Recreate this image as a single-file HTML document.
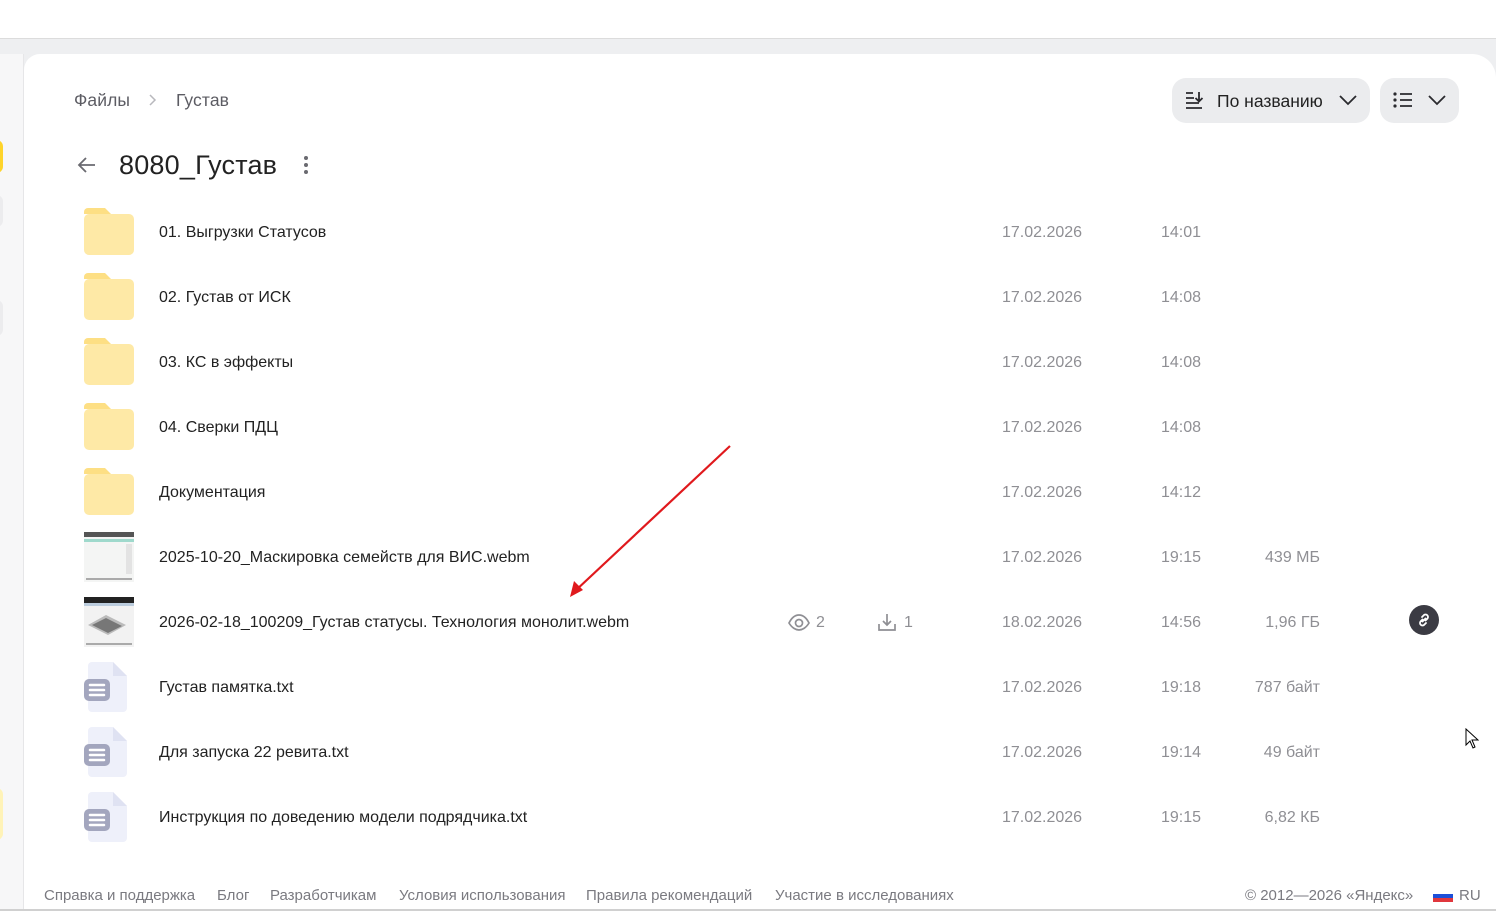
<!DOCTYPE html>
<html><head><meta charset="utf-8"><style>
*{margin:0;padding:0;box-sizing:border-box}
body{width:1496px;height:911px;overflow:hidden;background:#fff;font-family:"Liberation Sans","Noto Sans CJK SC",sans-serif;position:relative;color:#1f1f1f}
.a{position:absolute}
.row{position:absolute;left:0;width:1496px;height:65px}
.name{position:absolute;left:159px;font-size:16px;color:#222;top:50%;transform:translateY(-44%);white-space:nowrap}
.g{position:absolute;font-size:16px;color:#8f8f94;top:50%;transform:translateY(-44%);white-space:nowrap}
.ic{position:absolute;left:84px;top:50%;transform:translateY(-50%)}
.foot{position:absolute;top:887px;font-size:15px;color:#7a7a80;white-space:nowrap}
</style></head><body>
<div class="a" style="left:0;top:38px;width:1496px;height:1px;background:#dcdcdc"></div>
<div class="a" style="left:0;top:39px;width:1496px;height:872px;background:#eeeff1"></div>
<div class="a" style="left:0;top:54px;width:23px;height:857px;background:#f7f7f8"></div>
<div class="a" style="left:-10px;top:140px;width:13px;height:33px;background:#fed42b;border-radius:8px"></div>
<div class="a" style="left:-10px;top:195px;width:13px;height:32px;background:#ececee;border-radius:8px"></div>
<div class="a" style="left:-10px;top:300px;width:13px;height:36px;background:#ececee;border-radius:8px"></div>
<div class="a" style="left:-10px;top:788px;width:13px;height:52px;background:#fff3b8;border-radius:8px"></div>
<div class="a" style="left:23px;top:54px;width:1px;height:857px;background:#e6e6e8"></div>
<div class="a" style="left:24px;top:54px;width:1472px;height:855px;background:#fff;border-radius:16px 24px 0 0"></div>
<div class="a" style="left:0;top:909px;width:1496px;height:2px;background:#d0d0d0"></div>

<div class="a" style="left:74px;top:90px;font-size:17.5px;color:#5c5c63;letter-spacing:0.1px">Файлы</div>
<svg class="a" style="left:148px;top:93px" width="10" height="14"><path d="M2 2l5 5-5 5" fill="none" stroke="#b8b8bd" stroke-width="1.5"/></svg>
<div class="a" style="left:176px;top:90px;font-size:17.5px;color:#5c5c63;letter-spacing:0.1px">Густав</div>

<svg class="a" style="left:77px;top:156px" width="20" height="18"><path d="M18 9H3M9 2L2 9l7 7" fill="none" stroke="#6a6a70" stroke-width="1.8"/></svg>
<div class="a" style="left:119px;top:150px;font-size:27px;color:#222;letter-spacing:0.2px">8080_Густав</div>
<svg class="a" style="left:302px;top:155px" width="8" height="22"><circle cx="4" cy="3" r="2" fill="#6a6a70"/><circle cx="4" cy="10" r="2" fill="#6a6a70"/><circle cx="4" cy="17" r="2" fill="#6a6a70"/></svg>

<div class="a" style="left:1172px;top:78px;width:198px;height:45px;background:#ebecee;border-radius:14px"></div>
<svg class="a" style="left:1184px;top:90px" width="20" height="20"><path d="M2 3h7M2 8h8M2 13h13M2 18h16" stroke="#2a2a2e" stroke-width="1.8"/><path d="M15 2v9M11.5 8l3.5 3.5 3.5-3.5" fill="none" stroke="#2a2a2e" stroke-width="1.8"/></svg>
<div class="a" style="left:1217px;top:91px;font-size:17.5px;color:#222">По названию</div>
<svg class="a" style="left:1338px;top:94px" width="20" height="12"><path d="M2 2l8 8 8-8" fill="none" stroke="#2a2a2e" stroke-width="1.8"/></svg>
<div class="a" style="left:1380px;top:78px;width:79px;height:45px;background:#ebecee;border-radius:14px"></div>
<svg class="a" style="left:1392px;top:91px" width="22" height="18"><circle cx="3" cy="3" r="1.6" fill="#2a2a2e"/><circle cx="3" cy="9" r="1.6" fill="#2a2a2e"/><circle cx="3" cy="15" r="1.6" fill="#2a2a2e"/><path d="M8 3h12M8 9h12M8 15h12" stroke="#2a2a2e" stroke-width="1.8"/></svg>
<svg class="a" style="left:1427px;top:94px" width="20" height="12"><path d="M2 2l8 8 8-8" fill="none" stroke="#2a2a2e" stroke-width="1.8"/></svg>

<div class="row" style="top:199px"><svg class="ic" width="52" height="48"><path d="M0 4a4 4 0 014-4h17l6 6H0z" fill="#fddf84"/><rect x="0" y="6" width="50" height="41" rx="5" fill="#fee9a6"/></svg><div class="name">01. Выгрузки Статусов</div><div class="g" style="left:1002px">17.02.2026</div><div class="g" style="left:1161px">14:01</div></div>
<div class="row" style="top:264px"><svg class="ic" width="52" height="48"><path d="M0 4a4 4 0 014-4h17l6 6H0z" fill="#fddf84"/><rect x="0" y="6" width="50" height="41" rx="5" fill="#fee9a6"/></svg><div class="name">02. Густав от ИСК</div><div class="g" style="left:1002px">17.02.2026</div><div class="g" style="left:1161px">14:08</div></div>
<div class="row" style="top:329px"><svg class="ic" width="52" height="48"><path d="M0 4a4 4 0 014-4h17l6 6H0z" fill="#fddf84"/><rect x="0" y="6" width="50" height="41" rx="5" fill="#fee9a6"/></svg><div class="name">03. КС в эффекты</div><div class="g" style="left:1002px">17.02.2026</div><div class="g" style="left:1161px">14:08</div></div>
<div class="row" style="top:394px"><svg class="ic" width="52" height="48"><path d="M0 4a4 4 0 014-4h17l6 6H0z" fill="#fddf84"/><rect x="0" y="6" width="50" height="41" rx="5" fill="#fee9a6"/></svg><div class="name">04. Сверки ПДЦ</div><div class="g" style="left:1002px">17.02.2026</div><div class="g" style="left:1161px">14:08</div></div>
<div class="row" style="top:459px"><svg class="ic" width="52" height="48"><path d="M0 4a4 4 0 014-4h17l6 6H0z" fill="#fddf84"/><rect x="0" y="6" width="50" height="41" rx="5" fill="#fee9a6"/></svg><div class="name">Документация</div><div class="g" style="left:1002px">17.02.2026</div><div class="g" style="left:1161px">14:12</div></div>
<div class="row" style="top:524px"><svg class="ic" width="50" height="50"><rect width="50" height="50" fill="#f4f5f4"/><rect width="50" height="5" fill="#555"/><rect x="0" y="7" width="50" height="3" fill="#9fd9cc"/><rect x="2" y="46" width="46" height="2" fill="#aaa"/><rect x="42" y="12" width="6" height="30" fill="#e3e3e3"/></svg><div class="name">2025-10-20_Маскировка семейств для ВИС.webm</div><div class="g" style="left:1002px">17.02.2026</div><div class="g" style="left:1161px">19:15</div><div class="g" style="right:176px">439 МБ</div></div>
<div class="row" style="top:589px"><svg class="ic" width="50" height="50"><rect width="50" height="50" fill="#f2f2f2"/><rect width="50" height="6" fill="#222"/><rect x="0" y="6" width="50" height="3" fill="#bcd"/><path d="M4 28l18-10 20 10-18 10z" fill="#bbb"/><path d="M8 28l14-7 16 8-14 7z" fill="#777"/><rect x="2" y="46" width="46" height="2" fill="#aaa"/></svg><div class="name">2026-02-18_100209_Густав статусы. Технология монолит.webm</div>
<svg class="a" style="left:788px;top:24px" width="22" height="18"><path d="M1 10c3-6 7-8 10-8s7 2 10 8c-3 5-7 7-10 7s-7-2-10-7z" fill="none" stroke="#8f8f94" stroke-width="1.7"/><circle cx="11" cy="10" r="3.5" fill="none" stroke="#8f8f94" stroke-width="1.7"/></svg><div class="g" style="left:816px">2</div>
<svg class="a" style="left:877px;top:23px" width="20" height="20"><path d="M10 2v11M6 9l4 4 4-4M2 12v6h16v-6" fill="none" stroke="#8f8f94" stroke-width="1.7"/></svg><div class="g" style="left:904px">1</div>
<div class="g" style="left:1002px">18.02.2026</div><div class="g" style="left:1161px">14:56</div><div class="g" style="right:176px">1,96 ГБ</div>
<svg class="a" style="left:1409px;top:16px" width="30" height="30"><circle cx="15" cy="15" r="15" fill="#3b3b43"/><path d="M13 12l2-2a2.5 2.5 0 013.5 3.5l-2 2M17 18l-2 2a2.5 2.5 0 01-3.5-3.5l2-2M13.5 16.5l3-3" fill="none" stroke="#fff" stroke-width="1.8" stroke-linecap="round"/></svg></div>
<div class="row" style="top:654px"><svg class="ic" width="44" height="50"><path d="M8 0h21l14 14v32a4 4 0 01-4 4H8a4 4 0 01-4-4V4a4 4 0 014-4z" fill="#eef0fa"/><path d="M29 0l14 14H29z" fill="#dfe2f2"/><rect x="0" y="17" width="26" height="22" rx="5" fill="#a3a6be"/><path d="M6 23h14M6 28h14M6 33h14" stroke="#fff" stroke-width="2.5" stroke-linecap="round"/></svg><div class="name">Густав памятка.txt</div><div class="g" style="left:1002px">17.02.2026</div><div class="g" style="left:1161px">19:18</div><div class="g" style="right:176px">787 байт</div></div>
<div class="row" style="top:719px"><svg class="ic" width="44" height="50"><path d="M8 0h21l14 14v32a4 4 0 01-4 4H8a4 4 0 01-4-4V4a4 4 0 014-4z" fill="#eef0fa"/><path d="M29 0l14 14H29z" fill="#dfe2f2"/><rect x="0" y="17" width="26" height="22" rx="5" fill="#a3a6be"/><path d="M6 23h14M6 28h14M6 33h14" stroke="#fff" stroke-width="2.5" stroke-linecap="round"/></svg><div class="name">Для запуска 22 ревита.txt</div><div class="g" style="left:1002px">17.02.2026</div><div class="g" style="left:1161px">19:14</div><div class="g" style="right:176px">49 байт</div></div>
<div class="row" style="top:784px"><svg class="ic" width="44" height="50"><path d="M8 0h21l14 14v32a4 4 0 01-4 4H8a4 4 0 01-4-4V4a4 4 0 014-4z" fill="#eef0fa"/><path d="M29 0l14 14H29z" fill="#dfe2f2"/><rect x="0" y="17" width="26" height="22" rx="5" fill="#a3a6be"/><path d="M6 23h14M6 28h14M6 33h14" stroke="#fff" stroke-width="2.5" stroke-linecap="round"/></svg><div class="name">Инструкция по доведению модели подрядчика.txt</div><div class="g" style="left:1002px">17.02.2026</div><div class="g" style="left:1161px">19:15</div><div class="g" style="right:176px">6,82 КБ</div></div>

<svg class="a" style="left:560px;top:440px" width="180" height="165"><path d="M170 6L14 152" stroke="#e0191d" stroke-width="2.2"/><path d="M10 157l4-16 9 9z" fill="#e0191d"/></svg>

<svg class="a" style="left:1465px;top:728px" width="14" height="22"><path d="M1 1v16l4-4 3 7 2-1-3-7h6z" fill="#fff" stroke="#000" stroke-width="1"/></svg>

<div class="foot" style="left:44px">Справка и поддержка</div>
<div class="foot" style="left:217px">Блог</div>
<div class="foot" style="left:270px">Разработчикам</div>
<div class="foot" style="left:399px">Условия использования</div>
<div class="foot" style="left:586px">Правила рекомендаций</div>
<div class="foot" style="left:775px">Участие в исследованиях</div>
<div class="foot" style="left:1245px">© 2012—2026 «Яндекс»</div>
<svg class="a" style="left:1433px;top:890px" width="20" height="12"><rect width="20" height="4" fill="#fff"/><rect y="4" width="20" height="4" fill="#1c4fd8"/><rect y="8" width="20" height="4" fill="#e0373d"/></svg>
<div class="foot" style="left:1459px">RU</div>
</body></html>
